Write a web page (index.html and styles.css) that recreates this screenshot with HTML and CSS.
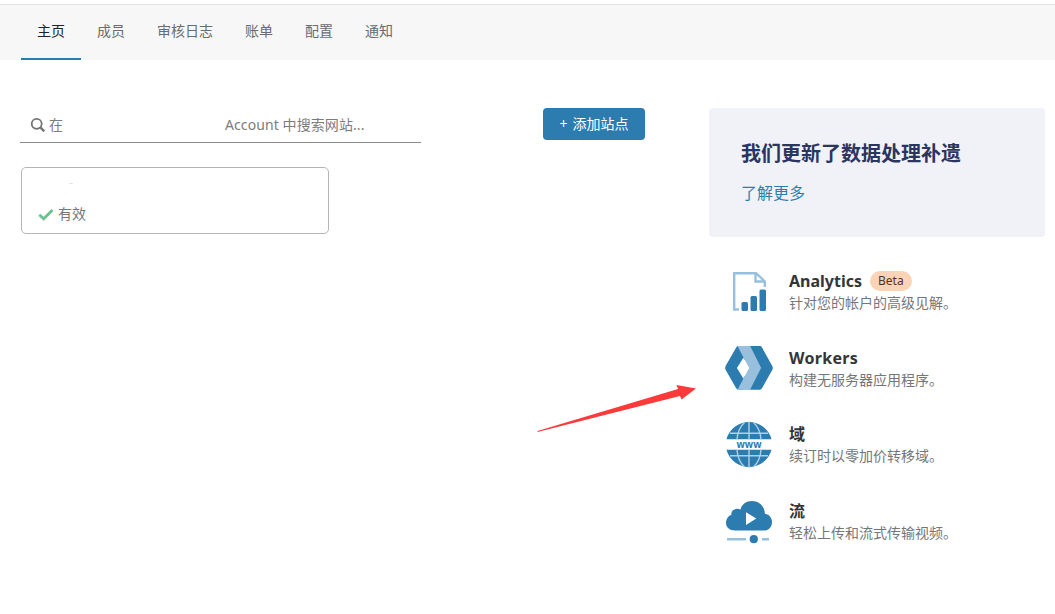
FILE: index.html
```html
<!DOCTYPE html>
<html lang="zh-CN">
<head>
<meta charset="utf-8">
<title>主页</title>
<link rel="stylesheet" href="styles.css">
</head>
<body>
<nav class="tabs">
  <a class="tab tab-active">主页</a>
  <a class="tab">成员</a>
  <a class="tab">审核日志</a>
  <a class="tab">账单</a>
  <a class="tab">配置</a>
  <a class="tab">通知</a>
</nav>
<main class="main">
  <section class="sites">
    <div class="toolbar">
      <div class="search">
        <svg class="search-icon" width="16" height="16" viewBox="0 0 16 16" fill="none" stroke="#747474" stroke-width="1.8"><circle cx="6.7" cy="6.8" r="5"/><path d="M10.3 10.4L14.3 14.4" stroke-width="2.3"/></svg>
        <span class="search-prefix">在</span>
        <span class="search-label">Account 中搜索网站...</span>
      </div>
      <button class="add-button"><span class="plus">+</span>添加站点</button>
    </div>
    <div class="site-card">
      <div class="site-name"><span class="site-dash"></span></div>
      <div class="site-status">
        <svg width="16" height="14" viewBox="0 0 16 14" fill="none" stroke="#6fc08f" stroke-width="2.8"><path d="M1.3 7.700L5.700 11.800L14.500 3"/></svg>
        <span>有效</span>
      </div>
    </div>
  </section>
  <aside class="side">
    <div class="notice">
      <h2 class="notice-title">我们更新了数据处理补遗</h2>
      <a class="notice-link">了解更多</a>
    </div>
    <div class="products">
      <div class="product">
        <svg class="product-icon" width="48" height="48" viewBox="0 0 48 48">
          <path d="M14 42.500H9.200V6.200H31L39.800 14.400V20M30.500 6.500V14.500H40" fill="none" stroke="#98bfdc" stroke-width="2.400"/>
          <g fill="#2c7cb0"><rect x="16.500" y="35" width="6.500" height="9" rx="1.500"/><rect x="25.500" y="29" width="6.500" height="15" rx="1.500"/><rect x="34.500" y="22.500" width="6.500" height="21.500" rx="1.500"/></g>
        </svg>
        <div class="product-text">
          <div class="product-title">Analytics<span class="badge">Beta</span></div>
          <div class="product-desc">针对您的帐户的高级见解。</div>
        </div>
      </div>
      <div class="product">
        <svg class="product-icon" width="48" height="48" viewBox="0 0 48 48">
          <path d="M13.400 2Q12 2 11.200 3.400L.6 22Q-.2 24 .6 25.700L11 44Q12 45.700 13.500 45.700H18L23 36L12 24L23 12L18 2Z" fill="#2c7cb0"/>
          <path d="M12.500 2H25L36 24L25 45.700H18L17 42L24 24Z" fill="#98bfdc"/>
          <path d="M12.500 45.700H25L36 24H24Z" fill="#98bfdc"/>
          <path d="M25 2H35Q36.300 2 37 3.400L47.500 22.400Q48.200 24 47.500 25.500L37 44.300Q36.200 45.700 35 45.700H25L36 24Z" fill="#2c7cb0"/>
          <path d="M18.300 13.800L24 24L18.300 34.400L12 24Z" fill="#fff"/>
        </svg>
        <div class="product-text">
          <div class="product-title"><span class="wide">Workers</span></div>
          <div class="product-desc">构建无服务器应用程序。</div>
        </div>
      </div>
      <div class="product">
        <svg class="product-icon" width="48" height="48" viewBox="0 0 48 48">
          <path d="M1.500 19.200A23.300 23.300 0 0 1 46.500 19.200ZM1.500 29.800A23.300 23.300 0 0 0 46.500 29.800Z" fill="#2c7cb0"/>
          <path d="M24 1.500V19.200M24 29.800V48M19.500 2.500C14.500 7 12.500 13 12 19.200M28.500 2.500C33.500 7 35.500 13 36 19.200M12 29.800C12.500 37 15 43 19.500 47M36 29.800C35.500 37 33 43 28.500 47M5 13.300H43M5 35.700H43" fill="none" stroke="#b0d0e5" stroke-width="1.400"/>
          <text class="www" x="24" y="27.600" text-anchor="middle" textLength="25" lengthAdjust="spacingAndGlyphs">www</text>
        </svg>
        <div class="product-text">
          <div class="product-title">域</div>
          <div class="product-desc">续订时以零加价转移域。</div>
        </div>
      </div>
      <div class="product">
        <svg class="product-icon" width="48" height="48" viewBox="0 0 48 48">
          <path d="M10 33.500C4.500 33.500 1 30.200 1 26C1 21.500 4 18.500 6.300 18C6 13 11 10.500 15.500 12.500C17 7 21 4 27 4C34 4 39.500 9 40 16.800C44.500 17.500 47 21 47 25.200C47 30 43.500 33.500 39 33.500Z" fill="#2c7cb0"/>
          <path d="M21 15.200L31.300 21.500L21 28Z" fill="#fff"/>
          <path d="M2 42.200H21M37 42.200H44" stroke="#98bfdc" stroke-width="2.500"/>
          <circle cx="28.800" cy="42.200" r="4.100" fill="#2c7cb0"/>
        </svg>
        <div class="product-text">
          <div class="product-title">流</div>
          <div class="product-desc">轻松上传和流式传输视频。</div>
        </div>
      </div>
    </div>
  </aside>
</main>
<svg class="arrow" width="160" height="50" viewBox="0 0 160 50"><path d="M.5 48L141 6L139.500 2L159 5.500L144.500 16.500L143 13L.5 49Z" fill="#fb3a39"/></svg>
</body>
</html>
```
FILE: styles.css
```css
* { box-sizing: border-box; }
body {
  margin: 0;
  padding-top: 4px;
  min-height: 614px;
  overflow: hidden;
  position: relative;
  background: #fff;
  color: #73777b;
  font: 14px/20px "Noto Sans", "Noto Sans CJK SC", sans-serif;
}
.tabs {
  display: flex;
  height: 56px;
  padding-left: 21px;
  background: #f7f7f7;
  border-top: 1px solid #e2e2e2;
}
.tab {
  padding: 16px 16px 0;
  border-bottom: 2px solid transparent;
  color: #686c70;
}
.tab-active { color: #222; border-color: #2c7cb0; }
.main {
  display: flex;
  justify-content: space-between;
  padding: 48px 10px 0 20px;
}
.sites { width: 625px; }
.toolbar { display: flex; justify-content: space-between; }
.search {
  display: flex;
  align-items: center;
  width: 401px;
  height: 35px;
  padding-left: 10px;
  border-bottom: 1px solid #8b8b8b;
  color: #7c7c7c;
}
.search-icon { margin-right: 3px; }
.search-prefix { width: 176px; }
.search-label { letter-spacing: 0.09px; }
.add-button {
  width: 102px;
  height: 32px;
  padding: 0;
  border: 0;
  border-radius: 4px;
  background: #2c7cb0;
  color: #fff;
  font: inherit;
}
.plus { margin-right: 5px; }
.site-card {
  width: 308px;
  height: 67px;
  margin: 24px 0 0 1px;
  padding: 5px 16px;
  border: 1px solid #b3b5b8;
  border-radius: 5px;
}
.site-name { display: flex; align-items: center; height: 20px; padding-left: 31px; }
.site-dash { width: 4px; height: 1px; background: #e4e4e4; }
.site-status { display: flex; align-items: center; gap: 4px; margin-top: 11px; }
.side { width: 336px; }
.notice {
  height: 129px;
  padding: 32px 32px 0;
  border-radius: 4px;
  background: #f1f2f8;
}
.notice-title { margin: 0; color: #2b3560; font-size: 20px; line-height: 28px; }
.notice-link { display: block; margin-top: 13px; color: #2c7cb0; font-size: 16px; line-height: 24px; }
.products { display: flex; flex-direction: column; gap: 28.6px; padding: 30px 0 0 16px; }
.product { display: flex; gap: 16px; height: 48px; }
.product-icon { display: block; flex: none; }
.product-text { padding-top: 3px; }
.product-title {
  display: flex;
  align-items: center;
  height: 22px;
  color: #333638;
  font-size: 16px;
  font-weight: 700;
}
.wide { letter-spacing: 0.3px; }
.product-desc { line-height: 22px; white-space: nowrap; }
.badge {
  margin-left: 8px;
  padding: 0 8px;
  border-radius: 10px;
  background: #fbd3b6;
  color: #503526;
  font-size: 12px;
  font-weight: 400;
  line-height: 20px;
}
.www { fill: #2c7cb0; font: 700 11px "Noto Sans", sans-serif; }
.arrow { position: absolute; left: 537px; top: 383px; }
```
